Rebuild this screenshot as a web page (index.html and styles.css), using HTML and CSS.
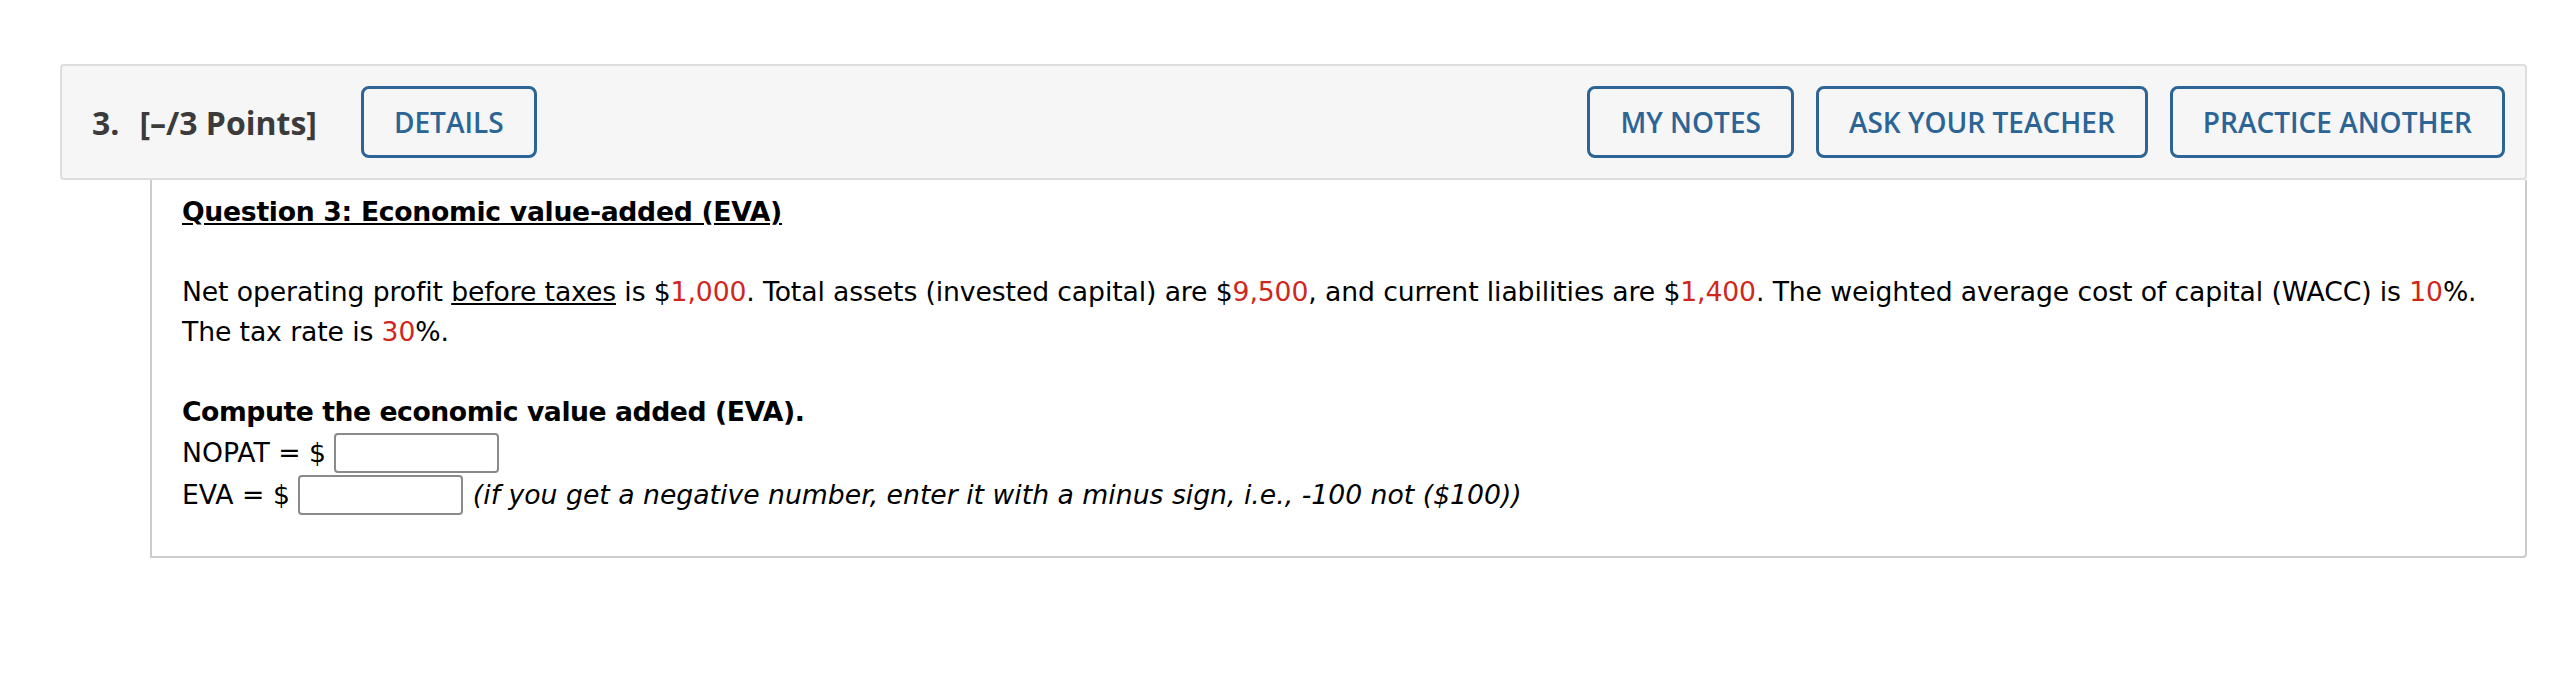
FILE: index.html
```html
<!DOCTYPE html>
<html>
<head>
<meta charset="utf-8">
<link rel="stylesheet" href="styles.css">
</head>
<body>
<div class="page">
  <div class="q-header">
    <span class="q-num">3.</span>
    <span class="q-points">[–/3 Points]</span>
    <button class="btn btn-details">DETAILS</button>
    <div class="right-btns">
      <button class="btn">MY NOTES</button>
      <button class="btn">ASK YOUR TEACHER</button>
      <button class="btn">PRACTICE ANOTHER</button>
    </div>
  </div>
  <div class="q-body">
    <p class="title"><u>Question 3: Economic value-added (EVA)</u></p>
    <p class="para">Net operating profit <u>before taxes</u> is $<span class="red">1,000</span>. Total assets (invested capital) are $<span class="red">9,500</span>, and current liabilities are $<span class="red">1,400</span>. The weighted average cost of capital (WACC) is <span class="red">10</span>%.<br>The tax rate is <span class="red">30</span>%.</p>
    <p class="compute">Compute the economic value added (EVA).</p>
    <div class="row"><span class="lbl">NOPAT = $</span><input class="ans" type="text"></div>
    <div class="row"><span class="lbl">EVA = $</span><input class="ans" type="text"><span class="hint">(if you get a negative number, enter it with a minus sign, i.e., -100 not ($100))</span></div>
  </div>
</div>
</body>
</html>
```
FILE: styles.css
```css
html, body {
  margin: 0;
  padding: 0;
  background: #ffffff;
}
.page {
  padding: 64px 33px 0 60px;
}
.q-header {
  display: flex;
  align-items: center;
  background: #f6f6f6;
  border: 2px solid #dddddd;
  border-radius: 4px;
  padding: 20px 20px 20px 30px;
  font-family: "Open Sans", sans-serif;
}
.q-num {
  font-size: 32px;
  font-weight: 700;
  color: #3b3b3b;
}
.q-points {
  font-size: 32px;
  font-weight: 700;
  color: #3b3b3b;
  margin-left: 20px;
}
.btn {
  box-sizing: border-box;
  height: 72px;
  padding: 0 30px;
  border: 3px solid #2b6495;
  border-radius: 8px;
  background: transparent;
  color: #2b6495;
  font-family: "Open Sans", sans-serif;
  font-size: 28px;
  font-weight: 600;
  cursor: pointer;
}
.btn-details {
  margin-left: 44px;
}
.right-btns {
  margin-left: auto;
  display: flex;
  gap: 22px;
}
.q-body {
  margin-left: 90px;
  border: 2px solid #cccccc;
  border-top: none;
  border-radius: 0 0 4px 0;
  padding: 12px 30px 40px 30px;
  font-family: "DejaVu Sans", Verdana, sans-serif;
  font-size: 26.67px;
  line-height: 40px;
  color: #000000;
}
.q-body p {
  margin: 0;
}
.title {
  font-weight: 700;
  letter-spacing: -0.3px;
  margin-bottom: 40px !important;
}
.para {
  letter-spacing: -0.12px;
  margin-bottom: 40px !important;
}
.compute {
  font-weight: 700;
  letter-spacing: -0.45px;
}
.red {
  color: #d0271d;
}
.row {
  display: flex;
  align-items: center;
  height: 42px;
}
.lbl {
  white-space: pre;
  margin-right: 8px;
}
.ans {
  box-sizing: border-box;
  width: 165px;
  height: 40px;
  border: 2px solid #8a8a8a;
  border-radius: 4px;
  margin: 0;
  padding: 0;
  background: #fff;
}
.hint {
  font-style: italic;
  margin-left: 10px;
}
```
